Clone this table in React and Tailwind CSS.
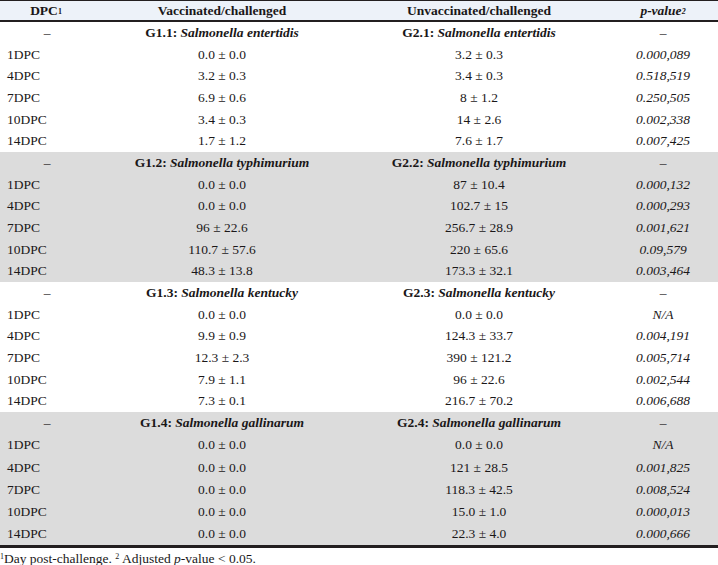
import React from "react";

const groups = [
  {
    a: "G1.1:", an: "Salmonella entertidis", b: "G2.1:", bn: "Salmonella entertidis", gray: false,
    rows: [
      ["1DPC", "0.0 ± 0.0", "3.2 ± 0.3", "0.000,089"],
      ["4DPC", "3.2 ± 0.3", "3.4 ± 0.3", "0.518,519"],
      ["7DPC", "6.9 ± 0.6", "8 ± 1.2", "0.250,505"],
      ["10DPC", "3.4 ± 0.3", "14 ± 2.6", "0.002,338"],
      ["14DPC", "1.7 ± 1.2", "7.6 ± 1.7", "0.007,425"],
    ],
  },
  {
    a: "G1.2:", an: "Salmonella typhimurium", b: "G2.2:", bn: "Salmonella typhimurium", gray: true,
    rows: [
      ["1DPC", "0.0 ± 0.0", "87 ± 10.4", "0.000,132"],
      ["4DPC", "0.0 ± 0.0", "102.7 ± 15", "0.000,293"],
      ["7DPC", "96 ± 22.6", "256.7 ± 28.9", "0.001,621"],
      ["10DPC", "110.7 ± 57.6", "220 ± 65.6", "0.09,579"],
      ["14DPC", "48.3 ± 13.8", "173.3 ± 32.1", "0.003,464"],
    ],
  },
  {
    a: "G1.3:", an: "Salmonella kentucky", b: "G2.3:", bn: "Salmonella kentucky", gray: false,
    rows: [
      ["1DPC", "0.0 ± 0.0", "0.0 ± 0.0", "N/A"],
      ["4DPC", "9.9 ± 0.9", "124.3 ± 33.7", "0.004,191"],
      ["7DPC", "12.3 ± 2.3", "390 ± 121.2", "0.005,714"],
      ["10DPC", "7.9 ± 1.1", "96 ± 22.6", "0.002,544"],
      ["14DPC", "7.3 ± 0.1", "216.7 ± 70.2", "0.006,688"],
    ],
  },
  {
    a: "G1.4:", an: "Salmonella gallinarum", b: "G2.4:", bn: "Salmonella gallinarum", gray: true,
    rows: [
      ["1DPC", "0.0 ± 0.0", "0.0 ± 0.0", "N/A"],
      ["4DPC", "0.0 ± 0.0", "121 ± 28.5", "0.001,825"],
      ["7DPC", "0.0 ± 0.0", "118.3 ± 42.5", "0.008,524"],
      ["10DPC", "0.0 ± 0.0", "15.0 ± 1.0", "0.000,013"],
      ["14DPC", "0.0 ± 0.0", "22.3 ± 4.0", "0.000,666"],
    ],
  },
];

const cols = "grid grid-cols-[94px_256px_258px_110px]";

export default function App() {
  return (
    <div
      className="w-[718px] h-[565px] bg-white text-[#1a1718] text-[13.5px] leading-none"
      style={{ fontFamily: '"Liberation Serif", "Times New Roman", serif' }}
    >
      <div className="border-t border-b-2 border-[#231f20] bg-[#edf2f9]">
        <div className={`${cols} h-[19px] items-center font-bold`}>
          <div className="text-center pr-[2px]">
            DPC<sup className="text-[8px] relative -top-[1px]">1</sup>
          </div>
          <div className="text-center">Vaccinated/challenged</div>
          <div className="text-center">Unvaccinated/challenged</div>
          <div className="text-center italic">
            p-value<sup className="text-[8px] relative -top-[1px]">2</sup>
          </div>
        </div>
      </div>
      <div className="border-b-[3px] border-[#231f20]">
        {groups.map((g, gi) => (
          <div key={gi} className={g.gray ? "bg-[#dcdcdc]" : "bg-white"}>
            <div className={`${cols} ${gi === 3 ? "h-[22.2px]" : "h-[21.67px]"} items-center`}>
              <div className="text-center">–</div>
              <div className="text-center font-bold">
                {g.a} <span className="italic">{g.an}</span>
              </div>
              <div className="text-center font-bold">
                {g.b} <span className="italic">{g.bn}</span>
              </div>
              <div className="text-center">–</div>
            </div>
            {g.rows.map((r, ri) => (
              <div key={ri} className={`${cols} ${gi === 3 ? "h-[22.2px]" : "h-[21.67px]"} items-center`}>
                <div className="pl-[7px]">{r[0]}</div>
                <div className="text-center">{r[1]}</div>
                <div className="text-center">{r[2]}</div>
                <div className="text-center italic">{r[3]}</div>
              </div>
            ))}
          </div>
        ))}
      </div>
      <div className="pt-[4px] text-[13.5px]">
        <sup className="text-[8px]">1</sup>Day post-challenge. <sup className="text-[8px]">2</sup> Adjusted{" "}
        <span className="italic">p</span>-value &lt; 0.05.
      </div>
    </div>
  );
}
